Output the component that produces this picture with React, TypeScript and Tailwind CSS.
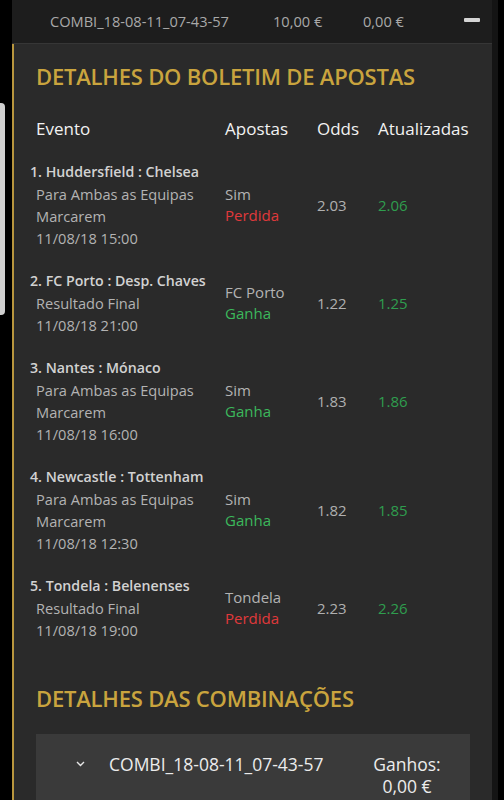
import React from "react";

type Bet = {
  title: string;
  lines: string[];
  pick: string;
  won: boolean;
  odds: string;
  updated: string;
};

const bets: Bet[] = [
  {
    title: "1. Huddersfield : Chelsea",
    lines: ["Para Ambas as Equipas", "Marcarem", "11/08/18 15:00"],
    pick: "Sim",
    won: false,
    odds: "2.03",
    updated: "2.06",
  },
  {
    title: "2. FC Porto : Desp. Chaves",
    lines: ["Resultado Final", "11/08/18 21:00"],
    pick: "FC Porto",
    won: true,
    odds: "1.22",
    updated: "1.25",
  },
  {
    title: "3. Nantes : Mónaco",
    lines: ["Para Ambas as Equipas", "Marcarem", "11/08/18 16:00"],
    pick: "Sim",
    won: true,
    odds: "1.83",
    updated: "1.86",
  },
  {
    title: "4. Newcastle : Tottenham",
    lines: ["Para Ambas as Equipas", "Marcarem", "11/08/18 12:30"],
    pick: "Sim",
    won: true,
    odds: "1.82",
    updated: "1.85",
  },
  {
    title: "5. Tondela : Belenenses",
    lines: ["Resultado Final", "11/08/18 19:00"],
    pick: "Tondela",
    won: false,
    odds: "2.23",
    updated: "2.26",
  },
];

function BetRow({ bet }: { bet: Bet }) {
  return (
    <div className="grid grid-cols-[189px_92px_61px_1fr] items-center">
      <div className="flex flex-col">
        <span className="-ml-[6px] h-[22px] whitespace-nowrap text-[14.2px] leading-[22px] font-semibold text-[#d2d2d2]">
          {bet.title}
        </span>
        {bet.lines.map((l) => (
          <span key={l} className="h-[22px] text-[14.6px] leading-[22px] text-[#b3b3b3]">
            {l}
          </span>
        ))}
      </div>
      <div className="flex flex-col text-[15px] leading-[21px]">
        <span className="text-[#b3b3b3]">{bet.pick}</span>
        <span className={bet.won ? "text-[#3cb85c]" : "text-[#e0393b]"}>
          {bet.won ? "Ganha" : "Perdida"}
        </span>
      </div>
      <span className="text-[15px] text-[#b0b0b0]">{bet.odds}</span>
      <span className="text-[15px] text-[#2f9d4e]">{bet.updated}</span>
    </div>
  );
}

export default function App() {
  return (
    <div
      className="relative h-screen overflow-hidden bg-black"
      style={{ fontFamily: '"Open Sans", "Noto Sans", sans-serif' }}
    >
      <div className="absolute left-0 top-[103px] h-[212px] w-[5px] rounded-r-[4px] bg-[#cfcfcf]" />

      <div className="ml-3 flex w-[486px]">
        <div className="w-[480px]">
          <div className="flex h-[44px] items-center border-b border-[#363636] bg-[#1d1d1d] pl-[38px] text-[14.6px] text-[#a9a9a9]">
            <span className="w-[223px]">COMBI_18-08-11_07-43-57</span>
            <span className="w-[90px]">10,00 €</span>
            <span className="w-[101px]">0,00 €</span>
            <span className="mb-[4px] h-[4px] w-[16px] rounded-[1px] bg-[#d4d4d4]" />
          </div>

          <div className="h-[756px] border-l-2 border-[#b8963e] bg-[#2a2a2a] pl-[22px] pt-[18px]">
            <h2 className="whitespace-nowrap text-[22px] leading-[28px] font-semibold tracking-[-0.2px] text-[#c9a43e]">
              DETALHES DO BOLETIM DE APOSTAS
            </h2>

            <div className="mt-[28px] grid grid-cols-[189px_92px_61px_1fr] text-[17px] leading-[22px] text-[#f2f2f2]">
              <span>Evento</span>
              <span>Apostas</span>
              <span>Odds</span>
              <span>Atualizadas</span>
            </div>

            <div className="mt-[21px] flex flex-col gap-[21px]">
              {bets.map((b) => (
                <BetRow key={b.title} bet={b} />
              ))}
            </div>

            <h2 className="mt-[43px] whitespace-nowrap text-[22px] leading-[28px] font-semibold tracking-[-0.2px] text-[#c9a43e]">
              DETALHES DAS COMBINAÇÕES
            </h2>

            <div className="mt-[22px] mr-[22px] h-[66px] bg-[#3a3a3a] pt-[19px]">
              <div className="flex items-start pl-[40px]">
                <div className="flex h-[22px] w-[33px] items-center">
                  <svg width="9" height="6" viewBox="0 0 9 6" fill="none">
                    <path d="M1 1l3.5 3.5L8 1" stroke="#e6e6e6" strokeWidth="1.4" />
                  </svg>
                </div>
                <span className="w-[256px] whitespace-nowrap text-[17.5px] leading-[22px] text-[#ececec]">
                  COMBI_18-08-11_07-43-57
                </span>
                <span className="w-[84px] text-center text-[17.5px] leading-[22px] text-[#ececec]">
                  Ganhos:
                  <br />
                  0,00 €
                </span>
              </div>
            </div>
          </div>
        </div>
        <div className="w-[6px] bg-[#141414]" />
      </div>
    </div>
  );
}
